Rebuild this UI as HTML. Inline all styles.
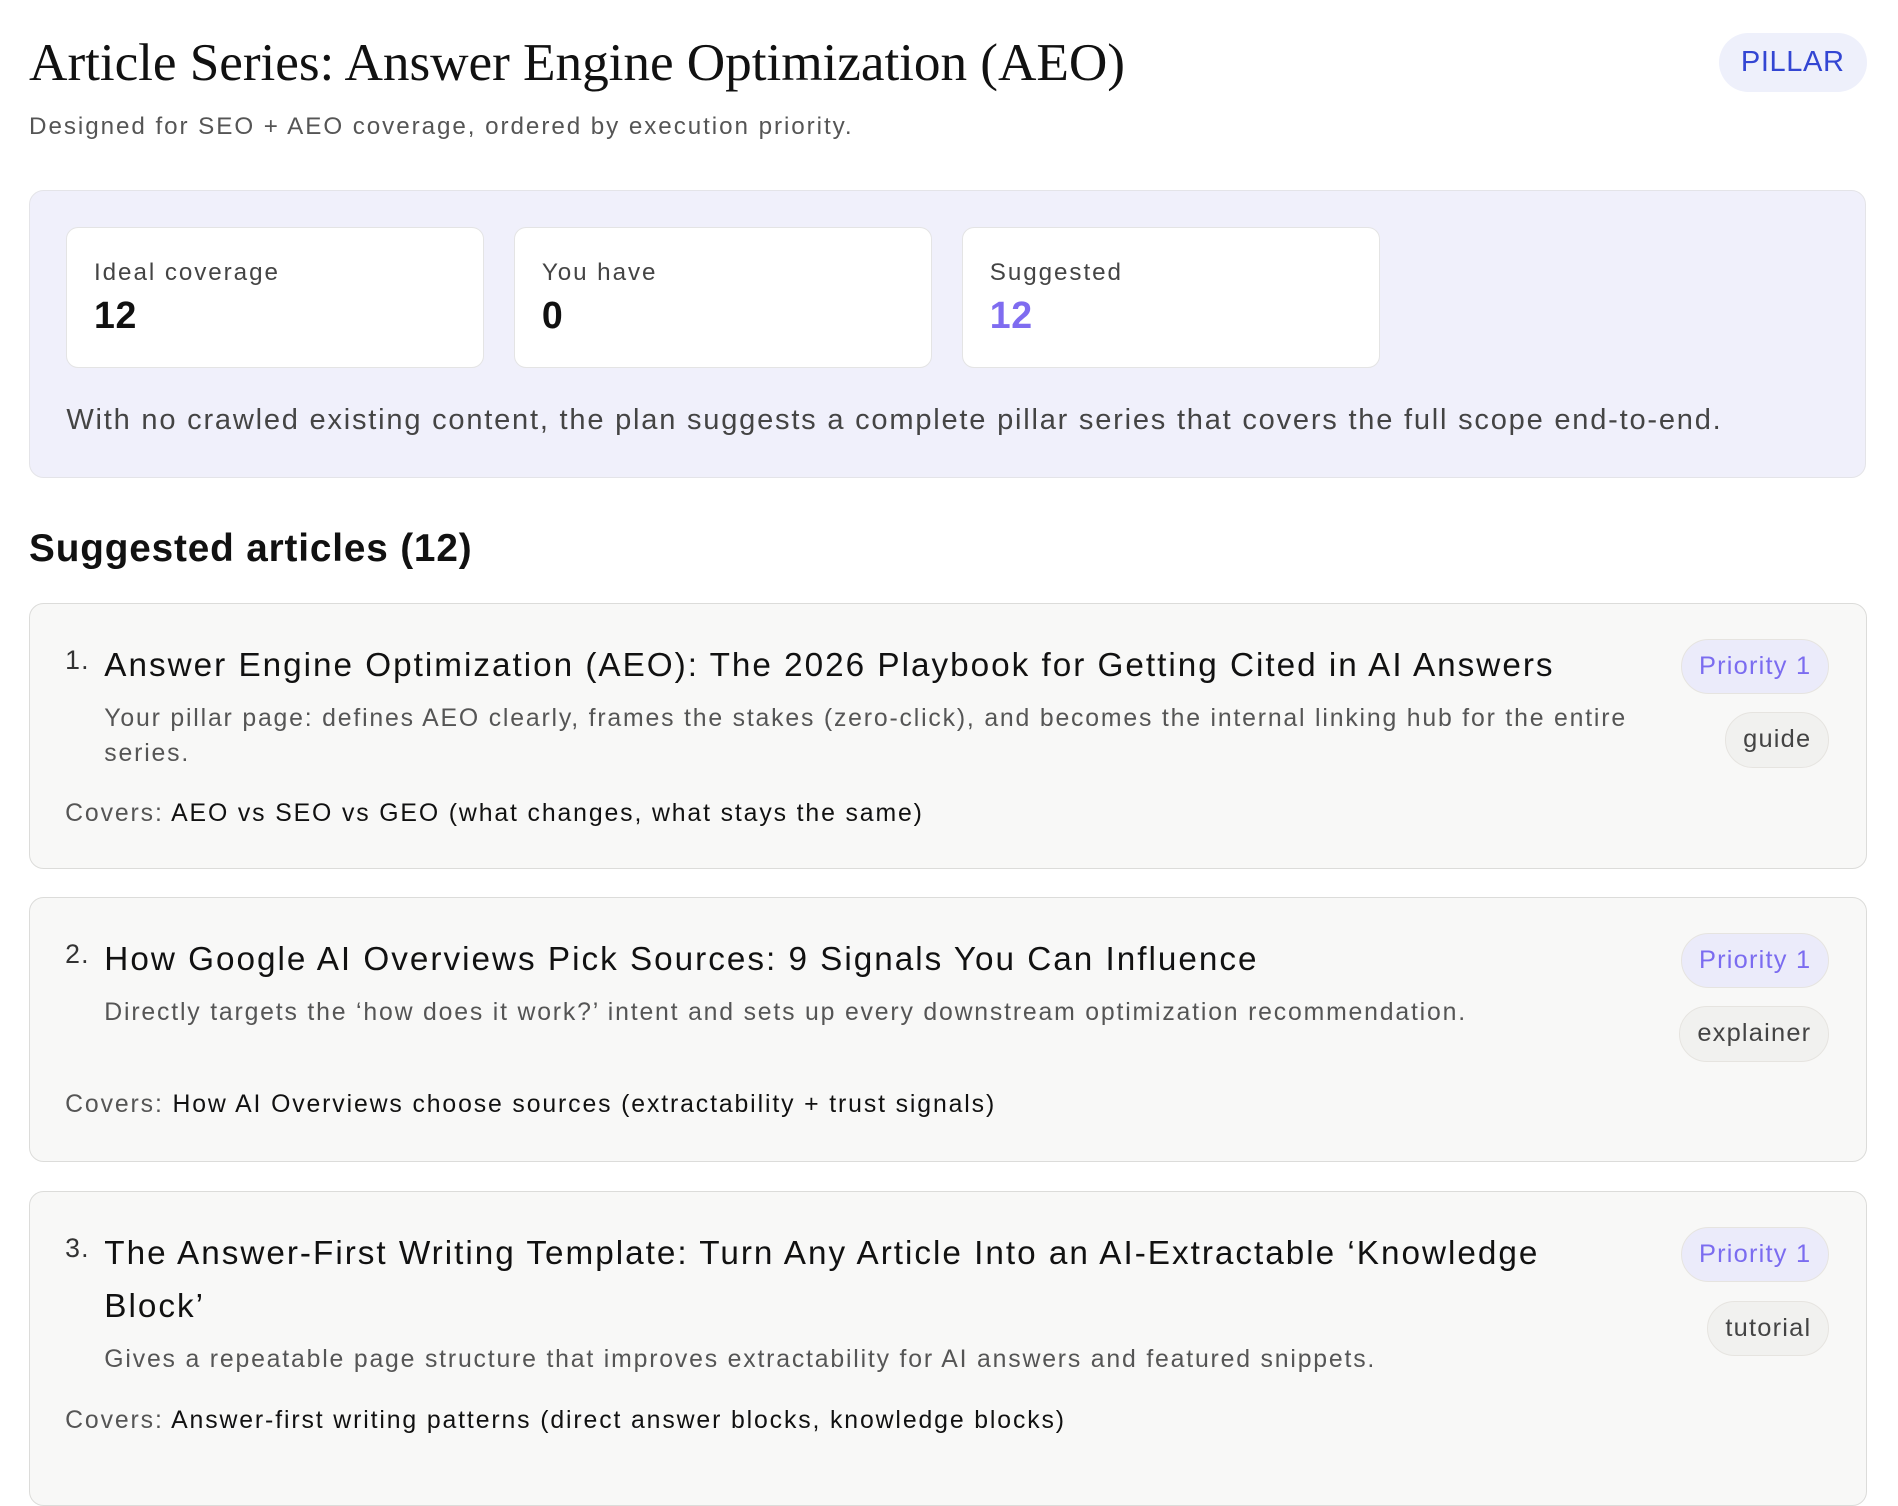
<!DOCTYPE html>
<html><head><meta charset="utf-8"><style>
html,body{margin:0;padding:0;background:#fff;}
body{width:1568px;height:1210px;overflow:hidden;zoom:1.2105;font-family:"Liberation Sans",sans-serif;color:#111;position:relative;}
.abs{position:absolute;}
h1{position:absolute;left:24px;top:24px;margin:0;font-family:"Liberation Serif",serif;font-weight:400;font-size:44px;line-height:56px;letter-spacing:-0.05px;color:#111;}
.sub{left:24px;top:92px;font-size:20px;color:#555;line-height:26px;letter-spacing:1.6px;}
.pillar{left:1420px;top:27px;width:122px;height:49px;border-radius:25px;background:#eef0fb;color:#3346d3;font-size:24px;line-height:49px;text-align:center;letter-spacing:0.5px;}
.stats{left:24px;top:157px;width:1516px;height:236px;background:#f0f0fb;border:1px solid #e4e4e8;border-radius:12px;}
.sc{top:30px;width:345px;height:116px;background:#fff;border:1px solid #e4e4e4;border-radius:10px;box-sizing:border-box;}
.sc .l{position:absolute;left:22px;top:25px;font-size:20px;color:#444;letter-spacing:1.6px;}
.sc .n{position:absolute;left:22px;top:54px;font-size:31px;font-weight:700;color:#111;letter-spacing:0.5px;}
.para{left:30px;top:176px;font-size:24px;color:#444;white-space:nowrap;letter-spacing:1.47px;}
.h2{left:24px;top:435px;font-size:32px;font-weight:700;color:#111;letter-spacing:0.7px;}
.card{position:absolute;left:24px;width:1518px;background:#f8f8f7;border:1px solid #dcdcda;border-radius:12px;box-sizing:border-box;padding:29px 30px 29px 29px;}
.top{display:flex;justify-content:space-between;}
.left{display:flex;width:1300px;}
.num{font-size:22px;line-height:36px;color:#333;margin-right:12px;white-space:nowrap;letter-spacing:1px;}
.title{font-size:27.5px;line-height:44px;color:#111;letter-spacing:1.65px;}
.desc{font-size:20.5px;line-height:29px;color:#555;margin-top:7px;letter-spacing:1.5px;}
.badges{display:flex;flex-direction:column;align-items:flex-end;}
.pill{height:44px;border-radius:23px;border:1px solid #e6e4e0;font-size:21px;line-height:44px;padding:0 14px;box-sizing:content-box;letter-spacing:1px;}
.p1{background:#ebebfa;color:#7b6cf0;}
.p2{background:#f1f1ef;color:#444;margin-top:15px;}
.cov{font-size:20.5px;line-height:29px;margin-top:21px;color:#111;letter-spacing:1.55px;}
.cov span{color:#555;}
</style></head><body>
<h1>Article Series: Answer Engine Optimization (AEO)</h1>
<div class="abs sub">Designed for SEO + AEO coverage, ordered by execution priority.</div>
<div class="abs pillar">PILLAR</div>
<div class="abs stats">
  <div class="abs sc" style="left:30px"><div class="l">Ideal coverage</div><div class="n">12</div></div>
  <div class="abs sc" style="left:400px"><div class="l">You have</div><div class="n">0</div></div>
  <div class="abs sc" style="left:770px"><div class="l">Suggested</div><div class="n" style="color:#7f6cf0">12</div></div>
  <div class="abs para">With no crawled existing content, the plan suggests a complete pillar series that covers the full scope end-to-end.</div>
</div>
<div class="abs h2">Suggested articles (12)</div>

<div class="card" style="top:498px;height:220px">
 <div class="top">
  <div class="left"><div class="num">1.</div><div><div class="title">Answer Engine Optimization (AEO): The 2026 Playbook for Getting Cited in AI Answers</div><div class="desc">Your pillar page: defines AEO clearly, frames the stakes (zero-click), and becomes the internal linking hub for the entire series.</div></div></div>
  <div class="badges"><div class="pill p1">Priority 1</div><div class="pill p2">guide</div></div>
 </div>
 <div class="cov"><span>Covers:</span> AEO vs SEO vs GEO (what changes, what stays the same)</div>
</div>

<div class="card" style="top:741px;height:219px">
 <div class="top">
  <div class="left"><div class="num">2.</div><div><div class="title">How Google AI Overviews Pick Sources: 9 Signals You Can Influence</div><div class="desc">Directly targets the ‘how does it work?’ intent and sets up every downstream optimization recommendation.</div></div></div>
  <div class="badges"><div class="pill p1">Priority 1</div><div class="pill p2">explainer</div></div>
 </div>
 <div class="cov"><span>Covers:</span> How AI Overviews choose sources (extractability + trust signals)</div>
</div>

<div class="card" style="top:984px;height:260px">
 <div class="top">
  <div class="left"><div class="num">3.</div><div><div class="title">The Answer-First Writing Template: Turn Any Article Into an AI-Extractable ‘Knowledge Block’</div><div class="desc">Gives a repeatable page structure that improves extractability for AI answers and featured snippets.</div></div></div>
  <div class="badges"><div class="pill p1">Priority 1</div><div class="pill p2">tutorial</div></div>
 </div>
 <div class="cov"><span>Covers:</span> Answer-first writing patterns (direct answer blocks, knowledge blocks)</div>
</div>
</body></html>
